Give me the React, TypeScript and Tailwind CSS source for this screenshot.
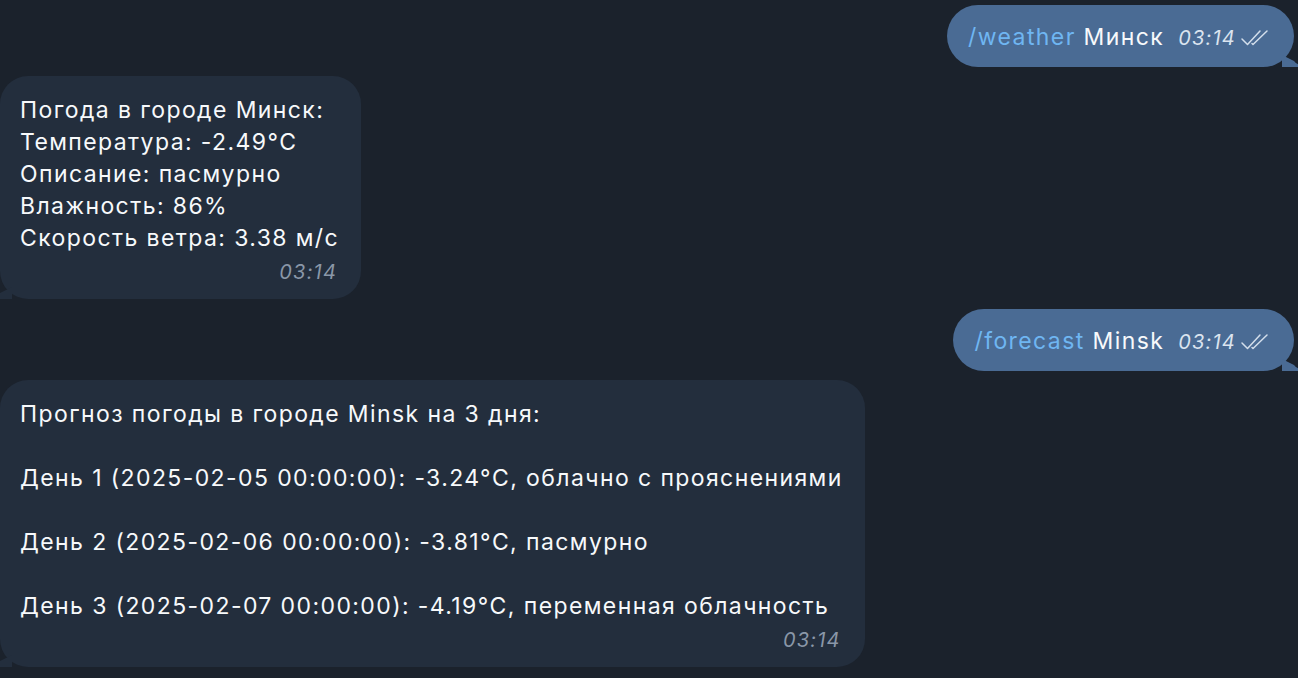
import React from 'react'

type Incoming = { lines: string[]; time: string }
type Outgoing = { command: string; arg: string; time: string }

function Checks() {
  return (
    <svg width="32" height="18" viewBox="0 0 32 18" fill="none" className="ml-[4px] mt-[3px]">
      <path d="M2 10 L7.5 15.5 L20 2" stroke="#d3deeb" strokeWidth="1.5" strokeLinecap="round" strokeLinejoin="round" />
      <path d="M12 14.5 L13 15.5 L27 2" stroke="#d3deeb" strokeWidth="1.5" strokeLinecap="round" strokeLinejoin="round" />
    </svg>
  )
}

function OutBubble({ msg, className }: { msg: Outgoing; className: string }) {
  return (
    <div className={`relative self-end mr-[4px] ${className}`}>
      <div className="flex items-center h-[62px] pl-[21px] pr-[22px] rounded-[31px] bg-[#4a6b94]">
        <span className="text-[23px] leading-[32px] mt-[1px] text-[#f7f9fb] whitespace-pre">
          <span className="text-[#6fb6f2]">{msg.command}</span> {msg.arg}
        </span>
        <span className="ml-[14px] mt-[4px] text-[20px] tracking-[1.2px] italic text-[#dbe4ef]">{msg.time}</span>
        <Checks />
      </div>
      <svg width="30" height="12" viewBox="0 0 30 12" className="absolute bottom-0 right-[-18px]">
        <path d="M0 0 L12 6 Q15 11 30 12 L0 12 Z" fill="#4a6b94" />
      </svg>
    </div>
  )
}

function InBubble({ msg, className }: { msg: Incoming; className: string }) {
  return (
    <div className={`relative self-start ${className}`}>
      <div className="flex flex-col pl-[20px] pr-[22px] pt-[18px] pb-[15px] rounded-[28px] bg-[#232e3d]">
        {msg.lines.map((l, i) => (
          <div key={i} className="h-[32px] text-[23px] leading-[32px] text-[#f7f9fb] whitespace-pre">{l}</div>
        ))}
        <div className="mt-[6px] h-[24px] leading-[24px] text-right pr-[2px] text-[20px] tracking-[1.2px] italic text-[#8a97a8]">{msg.time}</div>
      </div>
      <svg width="30" height="12" viewBox="0 0 30 12" className="absolute bottom-0 left-[-18px]">
        <path d="M30 0 L18 6 Q15 11 0 12 L30 12 Z" fill="#232e3d" />
      </svg>
    </div>
  )
}

export default function App() {
  return (
    <div
      className="w-full h-screen overflow-hidden bg-[#1b222c] flex flex-col pt-[5px] tracking-[1.4px]"
      style={{ fontFamily: 'Inter, "Noto Sans", sans-serif' }}
    >
      <OutBubble msg={{ command: '/weather', arg: 'Минск', time: '03:14' }} className="" />
      <InBubble
        className="mt-[9px]"
        msg={{
          lines: [
            'Погода в городе Минск:',
            'Температура: -2.49°C',
            'Описание: пасмурно',
            'Влажность: 86%',
            'Скорость ветра: 3.38 м/с',
          ],
          time: '03:14',
        }}
      />
      <OutBubble msg={{ command: '/forecast', arg: 'Minsk', time: '03:14' }} className="mt-[10px]" />
      <InBubble
        className="mt-[9px]"
        msg={{
          lines: [
            'Прогноз погоды в городе Minsk на 3 дня:',
            '',
            'День 1 (2025-02-05 00:00:00): -3.24°C, облачно с прояснениями',
            '',
            'День 2 (2025-02-06 00:00:00): -3.81°C, пасмурно',
            '',
            'День 3 (2025-02-07 00:00:00): -4.19°C, переменная облачность',
          ],
          time: '03:14',
        }}
      />
    </div>
  )
}
